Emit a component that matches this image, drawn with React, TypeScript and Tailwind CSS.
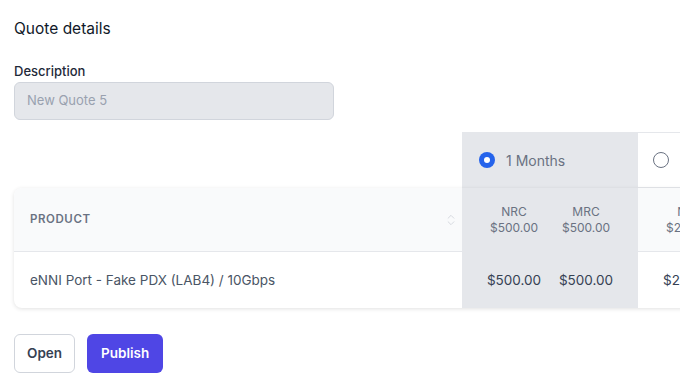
import { ChevronsUpDown } from 'lucide-react';

const priceCols = [
  { label: '1 Months', selected: true, nrc: '$500.00', mrc: '$500.00' },
  { label: '12 Months', selected: false, nrc: '$250.00', mrc: '$250.00' },
];

function Radio({ checked }: { checked: boolean }) {
  if (checked) {
    return (
      <span className="flex h-4 w-4 items-center justify-center rounded-full bg-[#2563eb]">
        <span className="h-1.5 w-1.5 rounded-full bg-white" />
      </span>
    );
  }
  return <span className="h-4 w-4 rounded-full border border-gray-500 bg-white" />;
}

export default function App() {
  return (
    <div className="w-screen overflow-hidden bg-white px-[14px] pb-4 pt-[19px] font-['Inter',sans-serif] text-gray-900">
      <h1 className="text-[15.5px] leading-5">Quote details</h1>

      <label className="mt-[22px] block text-[13px] font-medium leading-5 text-gray-800">Description</label>
      <div className="mt-px flex h-[38px] w-[320px] items-center rounded-md border border-gray-300 bg-gray-200 px-3 text-[13px] text-gray-400">
        New Quote 5
      </div>

      <div className="mt-3 flex w-[800px] flex-col">
        {/* term selector row */}
        <div className="flex h-14">
          <div className="w-[448px]" />
          {priceCols.map((c) => (
            <div
              key={c.label}
              className={
                c.selected
                  ? 'flex w-[176px] items-center gap-[11px] bg-gray-200 pl-[17px] text-[14px] text-gray-500'
                  : 'flex w-[176px] items-center gap-[11px] border-t border-b border-gray-200 bg-white pl-[15px] text-[14px] text-gray-500'
              }
            >
              <Radio checked={c.selected} />
              <span>{c.label}</span>
            </div>
          ))}
        </div>

        <div className="rounded-l-lg bg-white shadow-[0_1px_4px_rgba(0,0,0,0.12)]">
          <div className="flex h-16 border-b border-gray-200">
            <div className="flex w-[448px] items-center justify-between rounded-tl-lg bg-gray-50 pl-4 pr-1">
              <span className="text-[11.5px] font-semibold tracking-wider text-gray-500">PRODUCT</span>
              <ChevronsUpDown className="h-3.5 w-3.5 text-gray-300" strokeWidth={1.5} />
            </div>
            {priceCols.map((c) => (
              <div
                key={c.label}
                className={
                  c.selected
                    ? 'flex w-[176px] items-center gap-4 bg-gray-200 px-6 text-[12px] leading-4 text-gray-500'
                    : 'flex w-[176px] items-center gap-4 bg-gray-50 px-6 text-[12px] leading-4 text-gray-500'
                }
              >
                <div className="w-14 text-center">
                  NRC
                  <br />
                  {c.nrc}
                </div>
                <div className="w-14 text-center">
                  MRC
                  <br />
                  {c.mrc}
                </div>
              </div>
            ))}
          </div>
          <div className="flex h-14">
            <div className="flex w-[448px] items-center pl-4 text-[13.5px] text-gray-600">
              eNNI Port - Fake PDX (LAB4) / 10Gbps
            </div>
            {priceCols.map((c) => (
              <div
                key={c.label}
                className={
                  c.selected
                    ? 'flex w-[176px] items-center gap-4 bg-gray-200 px-6 text-[13.5px] text-gray-700'
                    : 'flex w-[176px] items-center gap-4 bg-white px-6 text-[13.5px] text-gray-700'
                }
              >
                <div className="w-14 text-center">{c.nrc}</div>
                <div className="w-14 text-center">{c.mrc}</div>
              </div>
            ))}
          </div>
        </div>
      </div>

      <div className="mt-[26px] flex gap-3">
        <button className="h-[39px] rounded-md border border-gray-300 bg-white px-3 text-[13.5px] font-semibold text-gray-700">
          Open
        </button>
        <button className="h-[39px] rounded-md bg-[#4f46e5] px-[14px] text-[13.5px] font-semibold text-white">
          Publish
        </button>
      </div>
    </div>
  );
}
